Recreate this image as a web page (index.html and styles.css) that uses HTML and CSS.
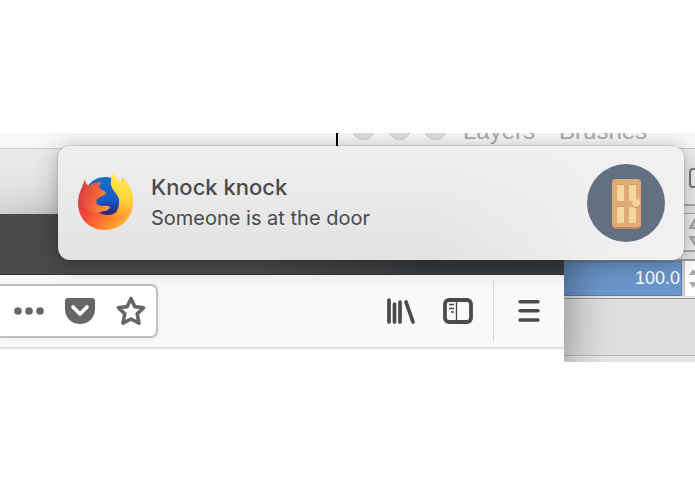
FILE: index.html
```
<!DOCTYPE html>
<html lang="en">

<head>
    <meta charset="UTF-8">
    <meta name="viewport" content="width=device-width, initial-scale=1.0">
    <title>Knock knock</title>
    <link rel="stylesheet" href="styles.css">
</head>

<body>
    <main class="desktop">
        <div class="back-window">
            <div class="back-title"></div>
            <div class="back-body"></div>
        </div>

        <section class="panel-window">
            <header class="panel-title">
                <span class="light"></span>
                <span class="light"></span>
                <span class="light"></span>
                <span class="panel-tab">Layers</span>
                <span class="panel-tab">Brushes</span>
            </header>
            <div class="panel-tools">
                <button class="tool-button" aria-label="Options"></button>
            </div>
            <div class="panel-gap"></div>
            <div class="panel-mode">
                <svg width="12" height="30" viewBox="0 0 12 30" fill="#c4c4c4" stroke="#a4a4a4" stroke-width="2">
                    <path d="M6 2 L11 11 H1 Z M1 20 H11 L6 28 Z" />
                </svg>
            </div>
            <div class="panel-gap short"></div>
            <div class="panel-opacity">
                <input class="opacity" type="text" value="100.0" aria-label="Opacity">
                <button class="stepper" aria-label="Change opacity">
                    <svg width="10" height="24" viewBox="0 0 10 24" fill="#aaa">
                        <path d="M5 2 L9 8 H1 Z M1 15 H9 L5 21 Z" />
                    </svg>
                </button>
            </div>
            <div class="panel-list"></div>
        </section>

        <section class="browser">
            <div class="tab-strip"></div>
            <div class="toolbar">
                <div class="url-bar">
                    <button aria-label="Page actions">
                        <svg width="32" height="32" viewBox="0 0 32 32" fill="#666">
                            <circle cx="5" cy="16" r="3.8" />
                            <circle cx="16" cy="16" r="3.8" />
                            <circle cx="27" cy="16" r="3.8" />
                        </svg>
                    </button>
                    <button aria-label="Save to Pocket">
                        <svg width="32" height="32" viewBox="0 0 32 32">
                            <path fill="#666" d="M4 3 H28 Q31 3 31 6 V14 C31 23 24 29 16 29 S1 23 1 14 V6 Q1 3 4 3 Z" />
                            <path d="M9 12 L16 19 L23 12" fill="none" stroke="#fff" stroke-width="3.6" stroke-linecap="round" stroke-linejoin="round" />
                        </svg>
                    </button>
                    <button aria-label="Bookmark this page">
                        <svg width="32" height="32" viewBox="0 0 32 32" fill="none" stroke="#666" stroke-width="3.6" stroke-linejoin="round">
                            <path d="M16 3.5 L19.7 11.6 L28.6 12.8 L22.2 18.9 L24 28.2 L16 24 L8 28.2 L9.8 18.9 L3.4 12.8 L12.3 11.6 Z" />
                        </svg>
                    </button>
                </div>
                <div class="tools">
                    <button aria-label="Library">
                        <svg width="32" height="32" viewBox="0 0 32 32" fill="none" stroke="#4a4a4a" stroke-width="3.7" stroke-linecap="round">
                            <path d="M4 5 V27 M9.5 9 V27 M15 7 V27 M21 7 L28 27" />
                        </svg>
                    </button>
                    <button aria-label="Sidebars">
                        <svg width="32" height="32" viewBox="0 0 32 32" fill="none" stroke="#4a4a4a">
                            <rect x="3" y="5" width="26" height="22" rx="4" stroke-width="3.8" />
                            <path d="M14.5 5 V27" stroke-width="1.4" />
                            <path d="M7 9.5 H12 M7 13.5 H12 M9 17 H12" stroke-width="1.6" />
                        </svg>
                    </button>
                </div>
                <button class="menu" aria-label="Open menu">
                    <svg width="32" height="32" viewBox="0 0 32 32" stroke="#4a4a4a" stroke-width="3.4" stroke-linecap="round">
                        <path d="M7 6.7 H25 M7 15.8 H25 M7 25 H25" />
                    </svg>
                </button>
            </div>
            <div class="page"></div>
        </section>

        <article class="notification">
            <svg class="firefox" width="58" height="60" viewBox="0 0 58 60">
                <defs>
                    <linearGradient id="body" x1="0.1" y1="0.2" x2="0.9" y2="0.8">
                        <stop offset="0" stop-color="#d4404a" />
                        <stop offset="0.35" stop-color="#f4463a" />
                        <stop offset="0.7" stop-color="#ff7f2a" />
                        <stop offset="1" stop-color="#ffb338" />
                    </linearGradient>
                    <linearGradient id="globe" x1="0.5" y1="0" x2="0.5" y2="1">
                        <stop offset="0" stop-color="#1672cc" />
                        <stop offset="0.6" stop-color="#1559cc" />
                        <stop offset="1" stop-color="#31206f" />
                    </linearGradient>
                    <linearGradient id="tail" x1="0.6" y1="0" x2="0.4" y2="1">
                        <stop offset="0" stop-color="#fff04f" />
                        <stop offset="0.5" stop-color="#ffd43b" />
                        <stop offset="1" stop-color="#ff872b" />
                    </linearGradient>
                    <linearGradient id="face" x1="0" y1="0.3" x2="1" y2="0.6">
                        <stop offset="0" stop-color="#dc3f42" />
                        <stop offset="0.5" stop-color="#f3613a" />
                        <stop offset="1" stop-color="#ffa036" />
                    </linearGradient>
                </defs>
                <path fill="url(#body)" d="M8 10 C4 15 1 22 1 30 C1 46 13 57 28 57 C44 57 56 45 56 29 C56 19 52 11 46 5 L40 18 L26 30 Z" />
                <path fill="url(#globe)" d="M11 13 C17 4 28 2 37 6 C38 14 43 20 43 29 C43 37 38 42 31 42 C25 42 20 39 18 34 Z" />
                <path fill="url(#tail)" d="M36 0 C33 7 33 13 37 18 C40 22 43 25 42 31 C41 39 37 45 28 47 C42 52 56 43 56 28 C56 18 52 11 46 5 L45 9 C41 6 38 4 36 0 Z" />
                <path fill="url(#face)" d="M8 6 C8 10 10 12 12 13 C15 10 20 9 25 9 C22 12 22 14 23 16 C26 17 28 18 29 20 C28 23 24 23 22 25 C19 26 19 29 20 31 C25 35 28 31 33 34 C32 38 27 38 23 39 C18 42 8 38 5 30 C2 21 5 14 8 6 Z" />
            </svg>
            <div class="message">
                <h1>Knock knock</h1>
                <p>Someone is at the door</p>
            </div>
            <svg class="door" width="78" height="78" viewBox="0 0 78 78">
                <circle cx="39" cy="39" r="39" fill="#637082" />
                <rect x="25" y="16" width="29" height="49" rx="4" fill="#b98a60" />
                <rect x="25" y="15" width="29" height="48" rx="4" fill="#e0aa76" />
                <path fill="#d39d68" d="M30 20 H37 V37 H30 Z M42 20 H49 V37 H42 Z M30 42 H37 V59 H30 Z M42 42 H49 V59 H42 Z" />
                <path fill="#f5d79b" d="M30 21 H37 V37 H30 Z M42 21 H49 V37 H42 Z M30 43 H37 V59 H30 Z M42 43 H49 V59 H42 Z" />
                <circle cx="49" cy="40" r="4" fill="#c58f5b" />
                <circle cx="49" cy="39" r="4" fill="#f5d39a" />
            </svg>
        </article>
    </main>
</body>

</html>
```
FILE: styles.css
```
* {
    box-sizing: border-box;
}

body {
    margin: 0;
    background-color: #fff;
    font-family: 'Liberation Sans', Arial, sans-serif;
}

button {
    display: flex;
    justify-content: center;
    align-items: center;
    border: none;
    padding: 0;
    background: none;
    cursor: pointer;
}

svg {
    display: block;
    flex: none;
}

.desktop {
    position: relative;
    overflow: hidden;
    margin: 133px 0;
}

/* Window behind the browser, top left */
.back-window {
    position: absolute;
    top: 0;
    left: 0;
    width: 336px;
}

.back-title {
    height: 16px;
    background-color: #f7f7f7;
    border-bottom: 1px solid #ccc;
}

.back-body {
    height: 68px;
    background: linear-gradient(#ebebeb, #dedede);
}

/* Layers panel */
.panel-window {
    position: absolute;
    top: 0;
    bottom: 0;
    left: 336px;
    right: 0;
    display: flex;
    flex-direction: column;
    align-items: stretch;
    background-color: #e4e4e4;
    border-left: 2px solid #000;
}

.panel-title {
    display: flex;
    align-items: flex-end;
    height: 16px;
    padding: 0 14px;
    background-color: #f7f7f7;
    border-bottom: 1px solid #c4c4c4;
}

.light {
    flex: none;
    width: 23px;
    height: 23px;
    margin: 0 13px 8px 0;
    border: 1px solid #c6c6c6;
    border-radius: 50%;
    background-color: #dedede;
}

.panel-tab {
    margin: 0 24px 4px 0;
    font-size: 24px;
    line-height: 26px;
    color: #aaa;
}

.light + .panel-tab {
    margin-left: 3px;
}

.panel-tools {
    display: flex;
    justify-content: flex-end;
    height: 57px;
    padding-top: 19px;
    background-color: #ececec;
    border-bottom: 2px solid #aaa;
}

.tool-button {
    width: 20px;
    height: 20px;
    margin-right: -14px;
    border: 2px solid #777;
    border-radius: 4px;
    background-color: #f0f0f0;
}

.panel-gap {
    height: 8px;
    border-bottom: 1px solid #aaa;
}

.panel-mode {
    display: flex;
    justify-content: flex-end;
    align-items: center;
    height: 38px;
    margin-right: -6px;
    background-color: #eee;
    border-bottom: 2px solid #aaa;
}

.panel-gap.short {
    height: 9px;
    border-bottom: 2px solid #999;
}

.panel-opacity {
    display: flex;
    height: 38px;
    padding-bottom: 2px;
    border-bottom: 1px solid #999;
}

.opacity {
    flex: 1;
    min-width: 0;
    border: 1px solid #5480b4;
    padding: 0 1px;
    background-color: #6b97cb;
    font-family: inherit;
    font-size: 18px;
    color: #fff;
    text-align: right;
}

.stepper {
    width: 13px;
    padding-left: 6px;
    border-left: 3px solid #ccc;
    background-color: #fff;
    overflow: hidden;
}

.panel-list {
    height: 57px;
    background-color: #dfdfdf;
    border-bottom: 1px solid #bbb;
}

/* Browser */
.browser {
    position: relative;
    margin: 81px 131px 0 0;
    box-shadow: 0 16px 50px rgba(0, 0, 0, 0.45);
}

.tab-strip {
    height: 61px;
    background: linear-gradient(to right, #4a4a4a 45%, #383b3e 75%);
    border-bottom: 1px solid #333;
}

.toolbar {
    display: flex;
    align-items: center;
    height: 74px;
    background-color: #f9f9f9;
    border-bottom: 2px solid #e0e0e0;
}

.url-bar {
    display: flex;
    height: 54px;
    padding-left: 3px;
    border: 2px solid #c0c0c0;
    border-left: none;
    border-radius: 0 7px 7px 0;
    background-color: #fff;
    box-shadow: 0 1px 4px rgba(0, 0, 0, 0.08);
}

.url-bar button {
    width: 51px;
}

.tools {
    display: flex;
    margin-left: auto;
    padding-right: 7px;
}

.tools button {
    width: 57px;
}

.menu {
    width: 71px;
    height: 62px;
    border-left: 1px solid #d8d8d8;
}

.page {
    height: 13px;
    background-color: #fff;
}

/* Notification */
.notification {
    position: absolute;
    top: 13px;
    left: 58px;
    right: 11px;
    display: flex;
    align-items: center;
    height: 114px;
    padding: 0 19px;
    border-radius: 12px;
    background: linear-gradient(to right, rgba(240, 240, 240, 0) 60%, #f0f0f0 90%), linear-gradient(#efefef, #e2e2e2);
    box-shadow: 0 0 2px rgba(0, 0, 0, 0.3), 0 4px 24px rgba(0, 0, 0, 0.3);
}

.message {
    flex: 1;
    padding-left: 16px;
    font-family: Inter, Roboto, sans-serif;
    color: #4a4a4a;
}

.message h1,
.message p {
    margin: 0;
    font-size: 20px;
    font-weight: 400;
    line-height: 31px;
}

.message h1 {
    font-size: 22px;
    font-weight: 500;
}
```
